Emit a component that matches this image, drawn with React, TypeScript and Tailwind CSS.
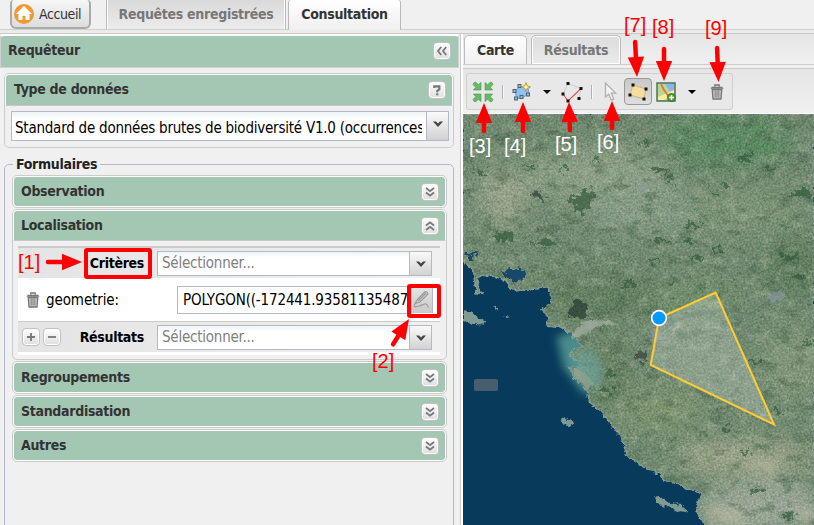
import React from "react";
import clsx from "clsx";

function ToolButton({ kind }: { kind: "up" | "down" | "left" | "help" | "plus" | "minus" }) {
  return (
    <span className="flex h-[18px] w-[18px] shrink-0 items-center justify-center rounded-[4px] border border-[#c2c2c2] bg-gradient-to-b from-white to-[#dedede] shadow-[inset_0_0_0_1px_#ffffff]">
      <svg width="14" height="14" viewBox="0 0 14 14" fill="none" stroke="#777" strokeWidth="1.8">
        {kind === "down" && <path d="M3 3l4 3.2L11 3M3 7.5l4 3.2 4-3.2" />}
        {kind === "up" && <path d="M3 6.5l4-3.2 4 3.2M3 11l4-3.2 4 3.2" />}
        {kind === "left" && <path d="M6.2 3L3 7l3.2 4M11.2 3L8 7l3.2 4" />}
        {kind === "help" && <path d="M4.3 5V3.4h5v3L7.2 8v1.3M7.2 10.2v2" strokeWidth="2.2" />}
        {kind === "plus" && <path d="M3 7h8M7 3v8" />}
        {kind === "minus" && <path d="M3 7h8" />}
      </svg>
    </span>
  );
}

function Trigger() {
  return (
    <span className="flex h-full w-[22px] shrink-0 justify-center border-l border-[#b5b8c8] bg-gradient-to-b from-[#fafafa] to-[#d2d2d2]">
      <svg className="mt-[8px]" width="12" height="9" viewBox="0 0 12 9">
        <path d="M1 1.5h3l2 2 2-2h3L6 7z" fill="#444" />
      </svg>
    </span>
  );
}

function Combo({ children, className, muted }: { children: React.ReactNode; className?: string; muted?: boolean }) {
  return (
    <div className={clsx("flex border border-[#b5b8c8] bg-gradient-to-b from-[#eef4f4] via-white via-25% to-white text-[15px] tracking-[-0.23px]", className)}>
      <div className={clsx("flex min-w-0 grow items-center overflow-hidden whitespace-nowrap", muted ? "pl-1 text-[#808080]" : "mr-1 pl-[3px] pt-1 text-black")}>
        {children}
      </div>
      <Trigger />
    </div>
  );
}

function Trash() {
  return (
    <svg className="block" width="14" height="16" viewBox="0 0 14 16" fill="none" stroke="#777">
      <path d="M2.2 5.5h9.6L11 15H3z" fill="#c4c4c4" strokeWidth="1.3" />
      <path d="M.7 4.2h12.6M1.5 3.2h11" strokeWidth="1.1" />
      <path d="M4.8 2.7V1h4.4v1.7" strokeWidth="1.3" />
      <path d="M5.2 6.5v7M7 6.5v7M8.8 6.5v7" strokeWidth=".8" />
    </svg>
  );
}

function Section({ title, open, children }: { title: string; open?: boolean; children?: React.ReactNode }) {
  return (
    <div className="rounded-[5px] border border-[#cbcbcb]">
      <div
        className={clsx(
          "flex h-[31px] items-center justify-between border border-white bg-[#a4c7b3] pl-[7px] pr-[6px] text-[#333]",
          open ? "rounded-t-[4px] border-b-[#c8c8c8]" : "rounded-[4px]"
        )}
      >
        <b className="-mt-px">{title}</b>
        <ToolButton kind={open ? "up" : "down"} />
      </div>
      {children}
    </div>
  );
}

function Sep() {
  return <span className="block h-[14px] w-px bg-[#b0b0bc] shadow-[1px_0_0_#f8f8f8]" />;
}

function Caret() {
  return <span className="block h-0 w-0 border-x-4 border-t-4 border-x-transparent border-t-black" />;
}

function ExtentIcon() {
  return (
    <svg width="22" height="22" viewBox="0 0 22 22" fill="#6cb868" stroke="#459348" strokeWidth=".6">
      {[0, 90, 180, 270].map((a) => (
        <path key={a} transform={`rotate(${a} 11 11)`} d="M1 3.6Q1.4 1.4 3.6 1L6.3 3.7 9 1.4V9H1.4l2.3-2.7z" />
      ))}
    </svg>
  );
}

function Dots({ pts }: { pts: number[][] }) {
  return (
    <>
      {pts.map(([x, y]) => (
        <rect key={`${x}-${y}`} x={x - 1.5} y={y - 1.5} width="3" height="3" fill="#111" />
      ))}
    </>
  );
}

function Toolbar() {
  return (
    <div className="flex h-[37px] w-[267px] items-center rounded-[3px] border border-[#cfcfcf] bg-[#e8e8e8] pl-[5px]">
      <ExtentIcon />
      <span className="ml-[8px]"><Sep /></span>
      <svg className="ml-[9px] shrink-0" width="20" height="20" viewBox="0 0 20 20">
        <path d="M3 8.5l5-3.5 8 .5 1 6-6 4-6.500 1z" fill="#8bc4f2" stroke="#6ba5d2" />
        <g fill="#a4b8c8" stroke="#4c6272" strokeWidth="1">
          <rect x="1" y="7.500" width="3" height="3" /><rect x="6" y="2.500" width="3" height="3" />
          <rect x="14.500" y="11" width="3" height="3" /><rect x="8" y="13.500" width="3" height="3" /><rect x="2.500" y="15" width="3" height="3" />
        </g>
        <path d="M14 .7l1.2 3.1L18.500 5l-3.300 1.300L14 9.500l-1.200-3.200L9.500 5l3.300-1.200z" fill="#fff2bd" stroke="#c4962c" />
      </svg>
      <span className="ml-[11px]"><Caret /></span>
      <svg className="ml-[10px] shrink-0" width="22" height="22" viewBox="0 0 22 22">
        <path d="M2 13L7 2.500l13 5-2 10" fill="none" stroke="#ccc" />
        <path d="M2 13l5 7L20 7.500" fill="none" stroke="#f04747" strokeWidth="1.1" />
        <Dots pts={[[7, 2.5], [20, 7.5], [2, 13], [18, 17.5], [7, 20]]} />
      </svg>
      <span className="ml-[8px]"><Sep /></span>
      <svg className="ml-[11px] shrink-0" width="16" height="22" viewBox="0 0 16 22">
        <path d="M2.500 2v14l3.200-2.800 2.600 6 2.500-1.100-2.500-6H12.500z" fill="#f3f3f3" stroke="#b0b0b0" strokeWidth="1.3" />
      </svg>
      <span className="ml-[5px] flex h-[27px] w-[28px] shrink-0 items-center justify-center rounded-[4px] border border-[#999] bg-gradient-to-b from-[#c8c8c8] to-[#dedede]">
        <svg width="22" height="20" viewBox="0 0 22 20">
          <path d="M6 3l13 4-2 10-14-4z" fill="#f5dda2" stroke="#d0b476" />
          <Dots pts={[[6, 3], [19, 7], [17, 17], [3, 13]]} />
        </svg>
      </span>
      <svg className="ml-[4px] shrink-0" width="20" height="20" viewBox="0 0 20 20">
        <rect x="1" y="1" width="18" height="18" fill="#b9d98a" stroke="#4b7362" strokeWidth="1.5" />
        <path d="M9 2h9v8h-4z" fill="#8db4ea" />
        <path d="M2 15L18 8v3L8 18H2z" fill="#ffed9b" />
        <path d="M5 2l3 6 5 7" stroke="#ed6a50" strokeWidth="1.7" fill="none" />
        <circle cx="15.5" cy="15.5" r="4" fill="#519c38" stroke="#397421" />
        <path d="M13 15.500h5M15.500 13v5" stroke="#fff" strokeWidth="1.5" />
      </svg>
      <span className="ml-[12px]"><Caret /></span>
      <span className="ml-[14px] mt-px"><Trash /></span>
    </div>
  );
}

const FORESTS = [
  [60, 182, 18], [205, 168, 14], [305, 172, 16], [595, 178, 22], [630, 203, 15], [850, 140, 22], [790, 222, 14],
  [755, 248, 12], [925, 170, 15], [1025, 245, 30], [695, 342, 20], [600, 387, 18], [705, 437, 16], [505, 518, 20],
  [125, 375, 30], [250, 395, 32], [980, 440, 24], [1010, 495, 20], [880, 750, 18], [855, 1025, 14], [980, 1212, 20],
  [450, 790, 20], [430, 840, 20], [550, 95, 13], [400, 145, 12], [765, 415, 14], [585, 450, 12], [630, 515, 9],
  [950, 905, 15], [1040, 700, 12], [800, 950, 12], [890, 1140, 22], [680, 387, 14],
];

const LAND =
  "M9 12H1062V1245H738L718 1218 708 1200 725 1150 700 1140 655 1122 612 1110 600 1090 552 1070 505 1040 488 990 455 945 425 905 390 880 382 840 340 800 330 772 365 765 330 735 345 715 370 712 350 690 330 665 300 650 262 645 268 620 245 600 275 578 268 530 225 534 165 543 145 520 112 500 60 495 50 520 64 550 48 548 45 515 40 485 9 452Z";

function SatelliteMap() {
  return (
    <svg className="block" width="351" height="411" viewBox="9 12 1053 1233">
      <defs>
        <filter id="grain" x="0" y="0" width="100%" height="100%" colorInterpolationFilters="sRGB">
          <feTurbulence type="fractalNoise" baseFrequency=".16" numOctaves="3" seed="8" />
          <feColorMatrix values="1.1 0 .3 0 -.2  1 .3 0 0 -.13  1 0 .3 0 -.2  0 0 0 0 1" />
        </filter>
        <filter id="patches" x="0" y="0" width="100%" height="100%" colorInterpolationFilters="sRGB">
          <feTurbulence type="fractalNoise" baseFrequency=".02 .032" numOctaves="4" seed="21" />
          <feColorMatrix values="0 0 0 0 .2  0 0 0 0 .34  0 0 0 0 .23  5 0 0 0 -2.7" />
        </filter>
        <filter id="fields" x="0" y="0" width="100%" height="100%" colorInterpolationFilters="sRGB">
          <feTurbulence type="fractalNoise" baseFrequency=".03" numOctaves="4" seed="35" />
          <feColorMatrix values="0 0 0 0 .68  0 0 0 0 .75  0 0 0 0 .64  0 4 0 0 -2.1" />
        </filter>
        <filter id="ragged" x="-20%" y="-20%" width="140%" height="140%">
          <feTurbulence type="fractalNoise" baseFrequency=".05" numOctaves="3" seed="3" result="n" />
          <feDisplacementMap in="SourceGraphic" in2="n" xChannelSelector="R" yChannelSelector="G" scale="50" />
        </filter>
        <filter id="rough" x="-20%" y="-20%" width="140%" height="140%" colorInterpolationFilters="sRGB">
          <feTurbulence type="fractalNoise" baseFrequency=".07" numOctaves="3" seed="4" result="n" />
          <feDisplacementMap in="SourceGraphic" in2="n" xChannelSelector="R" yChannelSelector="G" scale="20" />
        </filter>
        <filter id="soft" x="-60%" y="-60%" width="220%" height="220%"><feGaussianBlur stdDeviation="34" /></filter>
        <filter id="haze" x="-60%" y="-60%" width="220%" height="220%"><feGaussianBlur stdDeviation="12" /></filter>
        <clipPath id="land"><path d={LAND} /></clipPath>
      </defs>
      <rect x="9" y="12" width="1053" height="1233" fill="#083b5b" />
      <path d="M290 680Q380 650 430 640L450 720 420 850 370 850 310 770Z" fill="#4a8b8c" filter="url(#haze)" />
      <path d={LAND} fill="#6c8b70" stroke="#869f96" strokeWidth="5" filter="url(#rough)" />
      <g clipPath="url(#land)">
        <g filter="url(#soft)">
          <ellipse cx="800" cy="95" rx="200" ry="75" fill="#4f8a5c" />
          <ellipse cx="420" cy="200" rx="220" ry="90" fill="#8ea68b" />
          <ellipse cx="130" cy="260" rx="70" ry="90" fill="#a1ae94" />
          <ellipse cx="560" cy="300" rx="180" ry="70" fill="#87a38b" />
          <ellipse cx="850" cy="300" rx="180" ry="70" fill="#7c9978" />
          <ellipse cx="700" cy="560" rx="160" ry="50" fill="#6c9069" />
          <ellipse cx="400" cy="560" rx="190" ry="60" fill="#5a7e5b" />
          <ellipse cx="1000" cy="470" rx="80" ry="90" fill="#547a58" />
          <ellipse cx="450" cy="790" rx="60" ry="100" fill="#5e7f5b" />
          <ellipse cx="1000" cy="760" rx="100" ry="100" fill="#829c7c" />
          <ellipse cx="850" cy="1040" rx="200" ry="50" fill="#a9b193" />
          <ellipse cx="900" cy="1190" rx="190" ry="80" fill="#a2b1a2" />
          <ellipse cx="600" cy="900" rx="130" ry="70" fill="#7d9870" />
        </g>
        <rect x="9" y="12" width="1053" height="1233" filter="url(#fields)" opacity=".4" />
        <rect x="9" y="12" width="1053" height="1233" filter="url(#patches)" opacity=".4" />
        <rect x="9" y="12" width="1053" height="1233" filter="url(#grain)" opacity=".25" />
        <g fill="#2d5737" opacity=".65" filter="url(#ragged)">
          {FORESTS.map(([x, y, r]) => (
            <ellipse key={`${x}-${y}`} cx={x + 4} cy={y + 4} rx={r * 1.1} ry={r * 0.38} />
          ))}
          <path d="M335 262l55-25 20 8-15 28-30 40-25-20z" />
          <path d="M215 268l22-25 28 27zM525 735l25-15 15 10-12 28-24-5z" fill="#303d36" />
          <path d="M328 610l20-42 30 10 5 40-40 8z" fill="#24352e" />
        </g>
        <path d="M320 680l58-46 50-4 56 17-62-2-55 26-35 18z" fill="#a5afa2" opacity=".7" filter="url(#rough)" />
        <path d="M570 690l40-30 50-35 60-15 70-10 80 12 60-40 30-40" fill="none" stroke="#5e7a70" strokeWidth="6" opacity=".7" />
        <path d="M570 660l35 5 0 24-30 12zM920 552l40-10 20 18-40 20zM530 230l28-10 10 14-28 12z" fill="#8c9ca8" opacity=".6" filter="url(#rough)" />
        <path d="M120 490l65-15 5 33-45 5zM25 430l20-5 5 12-22 5z" fill="#164a6a" filter="url(#ragged)" />
        <path d="M630 670l25-35 5 10-30 35zM345 770l35 25 20 30-18 12-37-37z" fill="#b3ae95" opacity=".6" filter="url(#rough)" />
        <path d="M860 1060l90-10-10 50-50-10zM740 1190l90 5 40 50H750zM1020 1190l42 10v40l-50-10z" fill="#c2bda5" opacity=".5" filter="url(#haze)" />
      </g>
      <path d="M330 735Q410 700 425 765T390 840Q370 800 330 775L365 760Z" fill="#6ca6a0" opacity=".6" filter="url(#haze)" />
      <g fill="#7f9b94" filter="url(#rough)">
        <path d="M9 600l30 6 14 20 22 4-5 14-36-3-25-12z" />
        <path d="M300 930l14-8 26 14-6 10-25-3z" />
        <path d="M585 1162l25 2 18 14 40 8 18 25-28-5-35-17-30-7z" />
        <path d="M98 590l20 2-5 8zM133 614l12 3-8 6z" />
      </g>
      <path d="M597 624L767 548 942 943 572 765Z" fill="#ffffff" fillOpacity=".2" stroke="#ffcc33" strokeWidth="6" />
      <circle cx="597" cy="624" r="22" fill="#0099ff" stroke="#fff" strokeWidth="5" />
      <rect x="42" y="807" width="72" height="36" rx="6" fill="#485e70" />
    </svg>
  );
}

const ARROWS = [
  [46, 262, 82, 262], [392, 346, 409, 319], [484, 133, 484, 103], [523, 133, 523, 102], [570, 132, 569, 102],
  [612, 130, 612, 101], [635, 40, 637, 77], [664, 47, 664, 81], [717, 46, 718.5, 82],
];
const LABELS: [string, number, number, string][] = [
  ["[1]", 18, 269, "red"], ["[2]", 372, 368, "red"], ["[3]", 469, 153, "white"], ["[4]", 504, 153, "white"],
  ["[5]", 555, 151, "white"], ["[6]", 597, 149, "white"], ["[7]", 624, 32, "red"], ["[8]", 652, 34, "red"], ["[9]", 705, 35, "red"],
];

function Annotations() {
  return (
    <svg className="pointer-events-none absolute left-0 top-0" width="814" height="525" viewBox="0 0 814 525">
      <g fill="none" stroke="red" strokeWidth="4">
        <rect x="86" y="250" width="64" height="27" rx="1" />
        <rect x="409" y="286" width="30" height="30" rx="1" />
      </g>
      {ARROWS.map(([x1, y1, x2, y2], i) => {
        const a = Math.atan2(y2 - y1, x2 - x1);
        const len = Math.hypot(x2 - x1, y2 - y1);
        return (
          <g key={i} transform={`translate(${x1} ${y1}) rotate(${(a * 180) / Math.PI})`}>
            <path d={`M2 0H${len - 15}`} stroke="red" strokeWidth="4.5" strokeLinecap="round" />
            <path d={`M${len} 0l-20-8.2v16.4z`} fill="red" />
          </g>
        );
      })}
      <g fontFamily="Liberation Sans, Arial, sans-serif" fontSize="20">
        {LABELS.map(([t, x, y, c]) => (
          <text key={t} x={x} y={y} fill={c} textLength="22">{t}</text>
        ))}
      </g>
    </svg>
  );
}

export default function App() {
  return (
    <div className="relative flex h-[525px] w-[814px] flex-col overflow-hidden bg-[#f0f0f0] font-['DejaVu_Sans_Condensed','DejaVu_Sans',sans-serif] text-[14px] leading-[18px] tracking-[-0.3px] [font-stretch:condensed]">
      <header className="flex h-[30px] shrink-0 border-b border-[#cfcfcf] pl-[10px]">
        <button className="flex h-[29px] w-[81px] items-center rounded-b-[6px] rounded-t-[4px] border-2 border-t-0 border-[#aaa] bg-gradient-to-b from-[#f6f6f6] to-[#dddddd] pl-[2px] text-[#333] tracking-[-0.4px]">
          <svg width="20" height="20" viewBox="0 0 20 20" className="mr-[5px] shrink-0">
            <circle cx="10" cy="10" r="10" fill="#ed9b35" />
            <path d="M10 2L2 10h2.500v6h4v-4h3v4h4v-6H18z" fill="white" />
          </svg>
          Accueil
        </button>
        <div className="ml-[15px] flex h-[29px] w-[180px] items-center justify-center border-x border-[#bbb] bg-gradient-to-b from-[#d9d9d9] to-[#ececec] font-bold text-[#777] shadow-[inset_1px_0_0_white,inset_-1px_0_0_white]">
          <span className="-mt-px whitespace-nowrap">Requêtes enregistrées</span>
        </div>
        <div className="ml-[2px] flex h-[30px] w-[113px] items-center justify-center rounded-t-[3px] border-x border-[#b8b8b8] bg-gradient-to-b from-white to-[#f0f0f0] font-bold text-[#333]">
          <span className="-mt-[2px]">Consultation</span>
        </div>
      </header>
      <div className="h-1 shrink-0 border-b border-[#c8c8c8] bg-[#ebebeb]" />
      <main className="flex min-h-0 grow">
        <aside className="flex w-[461px] shrink-0 flex-col border-r border-[#c9c9c9]">
          <div className="mr-[1px] flex h-[34px] shrink-0 items-center justify-between rounded-t-[4px] border border-t-2 border-[#d0d0d0] border-t-white bg-[#a4c7b3] pl-[7px] pr-[7px] font-bold text-[#333]">
            <span className="-mt-[3px]">Requêteur</span>
            <span className="-mt-[2px]"><ToolButton kind="left" /></span>
          </div>
          <div className="ml-1 mr-[6px] mt-[5px] h-[75px] shrink-0 rounded-[5px] border border-[#cbcbcb]">
            <div className="flex h-[32px] items-center justify-between rounded-t-[4px] border border-white border-b-[#c8c8c8] bg-[#a4c7b3] pl-[8px] pr-[6px] font-bold text-[#333]">
              <span className="-mt-[3px]">Type de données</span>
              <span className="-mt-px"><ToolButton kind="help" /></span>
            </div>
            <Combo className="ml-[6px] mr-[4px] mt-[5px] h-[30px]">Standard de données brutes de biodiversité V1.0 (occurrences)</Combo>
          </div>
          <fieldset className="ml-1 mr-[6px] mt-[7px] h-[400px] shrink-0 rounded-[5px] border border-[#b5b8c8] pl-[7px] pr-[6px]">
            <legend className="ml-[1px] px-[3px] font-bold text-[#222]">Formulaires</legend>
            <div className="mt-[2px] flex flex-col gap-[1px]">
              <Section title="Observation" />
              <Section title="Localisation" open>
                <div className="mb-[4px] ml-[5px] mr-[6px] mt-[5px] h-[109px] bg-white">
                  <div className="flex h-[32px] items-center border-t-2 border-[#cbcbcb] bg-gradient-to-r from-[#e4e4e4] to-[#f0f0f0]">
                    <b className="w-[126px] text-right text-black">Critères</b>
                    <Combo muted className="ml-[13px] h-[25px] w-[275px]">Sélectionner...</Combo>
                  </div>
                  <div className="flex h-[43px] items-center pl-[8px]">
                    <Trash />
                    <span className="ml-[6px] w-[131px] text-[15px] tracking-[-0.1px]">geometrie:</span>
                    <div className="h-[28px] w-[234px] overflow-hidden whitespace-nowrap border border-[#b5b8c8] pl-[5px] pt-[4px] text-[15px] tracking-[-0.15px]">POLYGON((-172441.93581135487</div>
                    <span className="flex h-[26px] w-[22px] items-center justify-center border-r border-[#b5b8c8] bg-gradient-to-b from-[#e5e5e5] to-[#c9c9c9]">
                      <svg width="20" height="21" viewBox="0 0 20 21" fill="none" stroke="#9b9b9b">
                        <path d="M5 11l8-8.500q2.500 0 3 2.500l-8 8-5 1.500z" fill="#ccc" strokeWidth="1.1" />
                        <path d="M6 12L14 4M3 15q-2.500 4 2.500 2.500t7-2.500 4 3.500" strokeWidth="1.2" />
                      </svg>
                    </span>
                  </div>
                  <div className="flex h-[31px] items-center border-t border-[#cbcbcb] bg-gradient-to-r from-[#e4e4e4] to-[#f0f0f0] pl-[4px]">
                    <ToolButton kind="plus" />
                    <span className="ml-[3px]"><ToolButton kind="minus" /></span>
                    <b className="w-[83px] text-right text-black">Résultats</b>
                    <Combo muted className="ml-[13px] h-[25px] w-[275px]">Sélectionner...</Combo>
                  </div>
                </div>
              </Section>
              <Section title="Regroupements" />
              <Section title="Standardisation" />
              <Section title="Autres" />
            </div>
          </fieldset>
        </aside>
        <section className="flex min-w-0 grow flex-col border-l-2 border-white">
          <div className="flex h-[31px] shrink-0 items-end border-b border-[#ccc] bg-gradient-to-b from-[#e5e5e5] to-[#f0f0f0] pl-px">
            <div className="flex h-[29px] w-[63px] items-center justify-center rounded-t-[5px] border border-b-0 border-[#bdbdbd] bg-gradient-to-b from-white to-[#f1f1f1] font-bold text-[#333]">Carte</div>
            <div className="ml-[4px] flex h-[29px] w-[90px] items-center justify-center rounded-t-[5px] border border-b-0 border-[#bdbdbd] bg-gradient-to-b from-[#dcdcdc] to-[#ebebeb] font-bold text-[#777] shadow-[inset_0_0_0_1px_white]">Résultats</div>
          </div>
          <div className="mt-[3px] flex h-[46px] shrink-0 items-center border-b border-t border-b-white border-t-[#cbcbcb] bg-gradient-to-b from-[#e5e5e5] to-[#f0f0f0] pl-[3px] pt-px">
            <Toolbar />
          </div>
          <SatelliteMap />
        </section>
      </main>
      <Annotations />
    </div>
  );
}
